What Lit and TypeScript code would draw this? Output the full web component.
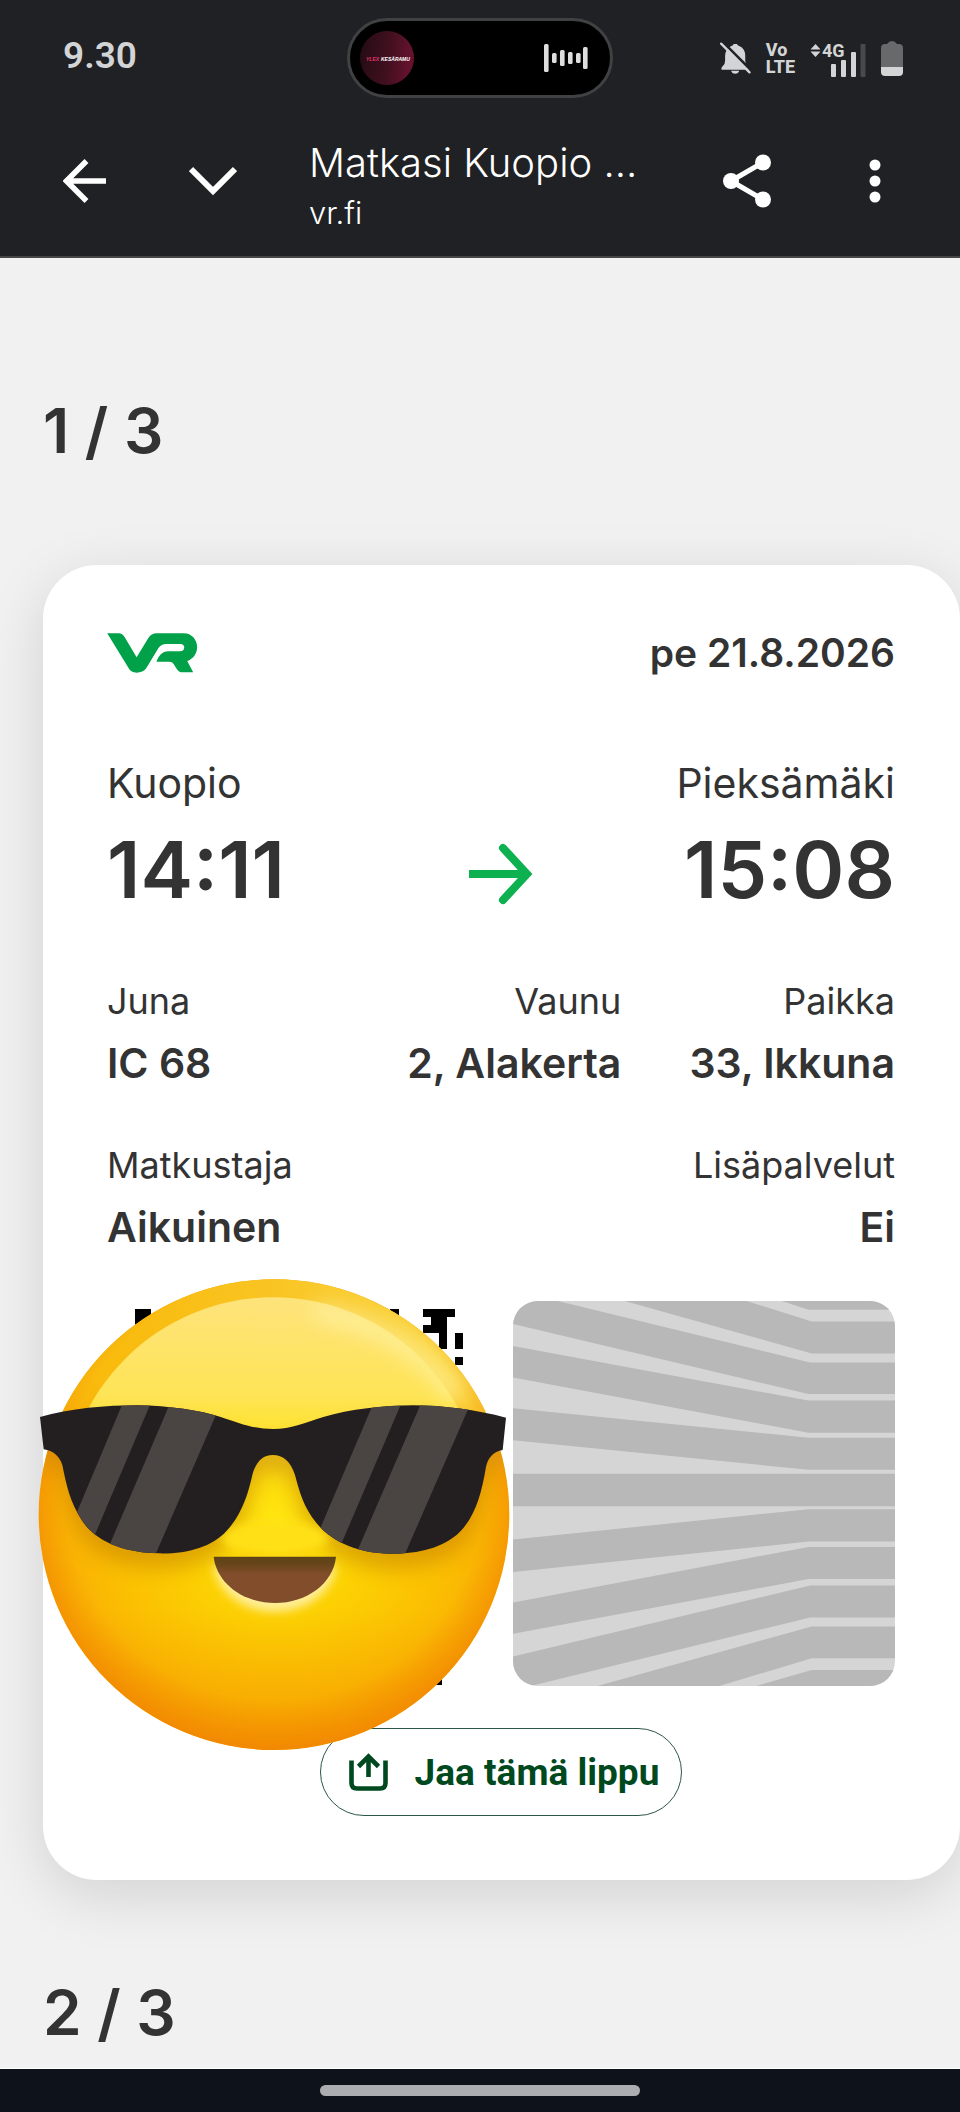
import { LitElement, html, css, svg } from "lit";
import { customElement, property } from "lit/decorators.js";

@customElement("status-bar")
class StatusBar extends LitElement {
  static styles = css`
    :host {
      display: grid;
      grid-template-columns: 1fr auto 1fr;
      align-items: center;
      padding: 18px 57px 16px;
      color: #d3d4d5;
      font-family: Roboto, sans-serif;
    }
    .clock { padding: 0 0 4px 6px; font-size: 37px; line-height: 44px; font-weight: 600; }
    .island {
      box-sizing: border-box;
      display: flex;
      align-items: center;
      justify-content: space-between;
      width: 266px;
      height: 80px;
      padding: 0 21px 0 10px;
      border: 3px solid #404142;
      border-radius: 40px;
      background: #000;
    }
    .icons { display: flex; align-items: center; justify-content: flex-end; gap: 15px; }
    .volte { font-size: 18px; line-height: 17px; font-weight: 800; }
    svg { display: block; }
    .tiny { font: italic 700 5px "Liberation Sans", sans-serif; }
    .net { font: 700 18px Roboto, sans-serif; }
  `;

  render() {
    const wave = [[2, 0, 28], [10, 9, 10], [18, 6, 16], [26, 8, 12], [34, 9, 10], [41, 3, 22]];
    return html`
      <div class="clock">9.30</div>
      <div class="island">
        <svg width="54" height="54" viewBox="0 0 54 54">
          <defs>
            <linearGradient id="art" x1="0" y1="0.4" x2="1" y2="0.5">
              <stop offset="0" stop-color="#250c14" />
              <stop offset="0.55" stop-color="#431020" />
              <stop offset="1" stop-color="#6a1230" />
            </linearGradient>
          </defs>
          <circle cx="27" cy="27" r="27" fill="url(#art)" />
          <text class="tiny" x="6" y="30" fill="#e0356b">YLEX</text>
          <text class="tiny" x="21" y="30" fill="#fff">KESÄRAMU</text>
        </svg>
        <svg width="46" height="28" viewBox="1 0 46 28">
          ${wave.map(([x, y, h]) => svg`<rect x=${x} y=${y} width="4.6" height=${h} rx="1.5" fill="#dedede" />`)}
        </svg>
      </div>
      <div class="icons">
        <svg width="31" height="32" viewBox="720 120 93 97">
          <path fill="#d3d4d5" d="M724 204 Q722 198 728 193 Q735 187 735 176 V162 Q736 140 754 132 Q760 130 761 126 H771 Q772 130 778 132 Q796 140 796 162 V176 Q796 187 803 193 Q809 198 807 204 Z M753 207 H778 Q775 216 765.500 216 Q756 216 753 207 Z" />
          <path d="M728 120 L816 208" stroke="#202124" stroke-width="8" />
          <path d="M723 125 L809 212" stroke="#d3d4d5" stroke-width="7" stroke-linecap="round" />
        </svg>
        <div class="volte">Vo<br />LTE</div>
        <svg width="56" height="38" viewBox="0 -4 56 38">
          <path fill="#d3d4d5" d="M0.500 6.500 L5.500 1 L10.500 6.500 Z M0.500 8.500 L5.500 14 L10.500 8.500 Z" />
          <text class="net" x="12" y="14" fill="#d3d4d5">4G</text>
          <g fill="#d3d4d5">
            <rect x="21" y="21" width="5" height="13" rx="1" />
            <rect x="31" y="17" width="5" height="17" rx="1" />
            <rect x="41" y="9" width="5" height="25" rx="1" />
          </g>
          <rect x="50.500" y="1" width="5" height="33" rx="1" fill="#48494b" />
        </svg>
        <svg width="22" height="35" viewBox="0 0 22 35">
          <path fill="#68696b" d="M4 3 H6 Q8 0 11 0 Q14 0 16 3 H18 Q22 3 22 7 V27 H0 V7 Q0 3 4 3 Z" />
          <path fill="#d3d4d5" d="M0 26 H22 V31 Q22 35 18 35 H4 Q0 35 0 31 Z" />
        </svg>
      </div>
    `;
  }
}

@customElement("browser-bar")
class BrowserBar extends LitElement {
  static styles = css`
    :host {
      display: flex;
      height: 134px;
      align-items: center;
      padding: 0 21px 8px;
      border-bottom: 2px solid #464646;
      color: #fff;
      font-family: Inter, sans-serif;
      font-weight: 300;
    }
    button {
      display: grid;
      place-items: center;
      flex: none;
      width: 128px;
      height: 128px;
      padding: 0;
      border: 0;
      background: none;
      color: inherit;
    }
    .page { flex: 1; min-width: 0; padding: 12px 0 0 32px; white-space: nowrap; }
    .title { font-size: 40px; line-height: 52px; }
    .domain { font-size: 31px; line-height: 48px; }
  `;

  render() {
    return html`
      <button aria-label="Takaisin">
        <svg width="44" height="44" viewBox="0 0 44 44" fill="none" stroke="#fff" stroke-width="5.5">
          <path d="M43 22 H5 M23.500 2 L3.500 22 L23.500 42" />
        </svg>
      </button>
      <button aria-label="Pienennä">
        <svg width="48" height="30" viewBox="0 0 48 30" fill="none" stroke="#fff" stroke-width="6">
          <path d="M2 3 L24 25 L46 3" />
        </svg>
      </button>
      <div class="page">
        <div class="title">Matkasi Kuopio ...</div>
        <div class="domain">vr.fi</div>
      </div>
      <button aria-label="Jaa">
        <svg width="48" height="54" viewBox="0 0 48 54" fill="#fff">
          <path d="M8 27 L40 8.500 M8 27 L40 45.500" stroke="#fff" stroke-width="5" />
          <circle cx="8" cy="27" r="8" /><circle cx="40" cy="8.500" r="8" /><circle cx="40" cy="45.500" r="8" />
        </svg>
      </button>
      <button aria-label="Lisää">
        <svg width="12" height="44" viewBox="0 0 12 44" fill="#fff">
          <circle cx="6" cy="6" r="5.500" /><circle cx="6" cy="22" r="5.500" /><circle cx="6" cy="38" r="5.500" />
        </svg>
      </button>
    `;
  }
}

@customElement("cool-face")
class CoolFace extends LitElement {
  static styles = css`
    :host { display: block; }
    svg { display: block; width: 100%; height: auto; }
  `;

  render() {
    const glasses = "M60 471 C150 445 260 436 350 436 C450 437 540 452 600 470 C660 490 700 507 760 507 C815 507 850 490 910 471 C990 448 1090 436 1180 436 C1270 436 1370 450 1458 473 L1448 570 C1420 575 1405 592 1398 620 C1385 700 1365 770 1320 815 C1270 865 1190 882 1110 881 C1020 880 940 850 890 790 C850 740 840 700 825 645 C812 605 790 585 758 585 C728 585 708 605 697 645 C685 700 665 765 620 812 C575 862 500 882 415 880 C320 878 230 850 185 780 C150 725 140 680 127 615 C120 590 100 572 71 568 Z";
    const mouth = "M581 890 H948 C940 970 860 1029 765 1029 C670 1029 590 970 581 890 Z";
    return html`
      <svg viewBox="54 54 1416 1419" role="img" aria-label="Aurinkolasihymiö">
        <defs>
          <radialGradient id="skin" gradientUnits="userSpaceOnUse" cx="775" cy="800" r="740">
            <stop offset="0" stop-color="#ffe812" />
            <stop offset="0.35" stop-color="#fcd203" />
            <stop offset="0.68" stop-color="#fbbf02" />
            <stop offset="0.88" stop-color="#f9b004" />
            <stop offset="1" stop-color="#f7a305" />
          </radialGradient>
          <linearGradient id="low" x1="0" y1="0.7" x2="0" y2="1">
            <stop offset="0" stop-color="#f08000" stop-opacity="0" />
            <stop offset="1" stop-color="#f08000" stop-opacity="0.4" />
          </linearGradient>
          <radialGradient id="rim" gradientUnits="userSpaceOnUse" cx="762" cy="690" r="790">
            <stop offset="0.8" stop-color="#f28500" stop-opacity="0" />
            <stop offset="1" stop-color="#f08000" stop-opacity="0.75" />
          </radialGradient>
          <linearGradient id="shine" gradientUnits="userSpaceOnUse" x1="0" y1="112" x2="0" y2="700">
            <stop offset="0" stop-color="#fee37b" />
            <stop offset="0.5" stop-color="#fee456" />
            <stop offset="0.72" stop-color="#ffe62c" stop-opacity="0.9" />
            <stop offset="1" stop-color="#ffe620" stop-opacity="0" />
          </linearGradient>
          <linearGradient id="top" gradientUnits="userSpaceOnUse" x1="300" y1="0" x2="1250" y2="0">
            <stop offset="0" stop-color="#f9bb0e" />
            <stop offset="0.5" stop-color="#f9c524" />
            <stop offset="1" stop-color="#fbd644" />
          </linearGradient>
          <linearGradient id="fade" gradientUnits="userSpaceOnUse" x1="0" y1="350" x2="0" y2="650">
            <stop offset="0" stop-color="#fff" />
            <stop offset="1" stop-color="#000" />
          </linearGradient>
          <mask id="upper"><rect width="1500" height="700" fill="url(#fade)" /></mask>
          <linearGradient id="lips" x1="0" y1="0" x2="0" y2="1">
            <stop offset="0" stop-color="#5d4318" />
            <stop offset="0.15" stop-color="#664519" />
            <stop offset="0.38" stop-color="#824d2a" />
          </linearGradient>
          <filter id="soft" x="-30%" y="-30%" width="160%" height="160%"><feGaussianBlur stdDeviation="30" /></filter>
          <filter id="glow" x="-30%" y="-60%" width="160%" height="220%"><feGaussianBlur stdDeviation="14" /></filter>
          <clipPath id="head"><circle cx="762" cy="764" r="706" /></clipPath>
          <clipPath id="lens"><path d=${glasses} /></clipPath>
        </defs>
        <g clip-path="url(#head)">
          <rect x="54" y="54" width="1416" height="1419" fill="url(#skin)" />
          <rect x="54" y="54" width="1416" height="640" fill="url(#top)" mask="url(#upper)" />
          <circle cx="762" cy="764" r="706" fill="url(#low)" />
          <circle cx="762" cy="764" r="706" fill="url(#rim)" />
          <circle cx="760" cy="740" r="628" fill="url(#shine)" />
          <path d="M880 155 C1080 185 1230 290 1310 420" fill="none" stroke="#fff6ae" stroke-width="46" opacity="0.75" filter="url(#soft)" />
          <g transform="translate(0 45)" opacity="0.42" filter="url(#soft)"><path d=${glasses} fill="#b56b00" /></g>
          <path d="M640 860 H890 L860 885 H670 Z" fill="#f5a800" opacity="0.5" filter="url(#glow)" />
          <g transform="translate(0 26)" filter="url(#glow)"><path d=${mouth} fill="#ffee9a" /></g>
          <ellipse cx="765" cy="835" rx="160" ry="52" fill="#ffe014" filter="url(#glow)" />
        </g>
        <path d=${mouth} fill="url(#lips)" />
        <path d=${glasses} fill="#231f20" />
        <g clip-path="url(#lens)" fill="#4a4442">
          <path d="M308 430 H392 L201 880 H119 Z M450 430 H603 L407 882 H257 Z" />
          <path d="M1060 430 H1144 L951 882 H868 Z M1203 430 H1352 L1155 882 H1008 Z" />
        </g>
      </svg>
    `;
  }
}

interface Fact { label: string; value: string; }

@customElement("ticket-card")
class TicketCard extends LitElement {
  @property() date = "";
  @property() from = "";
  @property() departs = "";
  @property() to = "";
  @property() arrives = "";
  @property({ attribute: false }) seat: Fact[] = [];
  @property({ attribute: false }) traveller: Fact[] = [];

  static styles = css`
    :host {
      display: block;
      padding: 64px 65px 64px 64px;
      border-radius: 54px;
      background: #fff;
      box-shadow: 0 15px 60px rgba(0, 0, 0, 0.13);
      color: #333;
      font-family: Inter, sans-serif;
    }
    svg { display: block; }
    .head { display: flex; align-items: center; justify-content: space-between; height: 48px; }
    .date { font-size: 39px; line-height: 48px; font-weight: 600; }
    .route { display: grid; grid-template-columns: 1fr auto 1fr; align-items: end; margin-top: 80px; }
    .stop { display: grid; gap: 16px; }
    .end { text-align: right; }
    .city { font-size: 41px; line-height: 52px; }
    .time { font-size: 79px; line-height: 88px; font-weight: 600; }
    .arrow { padding-bottom: 8px; }
    dl { display: flex; justify-content: flex-end; gap: 68px; margin: 64px 0 0; text-align: right; }
    .second { margin-top: 48px; }
    .fact:first-child { margin-right: auto; text-align: left; }
    dt { font-size: 36px; line-height: 48px; }
    dd { margin: 8px 0 0; font-size: 41px; line-height: 60px; font-weight: 600; }
    .codes { position: relative; display: grid; grid-template-columns: 1fr 1fr; gap: 24px; margin-top: 44px; }
    .codes svg { width: 100%; height: auto; }
    .pattern { border-radius: 25px; }
    .face { position: absolute; left: -69px; top: -23px; width: 472px; z-index: 1; pointer-events: none; }
    .share {
      display: flex;
      align-items: center;
      gap: 27px;
      box-sizing: border-box;
      height: 88px;
      margin: 42px auto 0;
      padding: 0 22px 0 28px;
      border: 1px solid #2c5746;
      border-radius: 44px;
      background: none;
      color: #00491f;
      font: 700 37px Roboto, sans-serif;
    }
  `;

  private facts(list: Fact[], extra = "") {
    return html`<dl class=${extra}>
      ${list.map((f) => html`<div class="fact"><dt>${f.label}</dt><dd>${f.value}</dd></div>`)}
    </dl>`;
  }

  render() {
    return html`
      <div class="head">
        <svg width="91" height="40" viewBox="320 760 274 121" role="img" aria-label="VR">
          <path fill="#00a149" d="M320 761 H355 Q366 761 373 773 L409 833 L444 776 Q453 761 470 761 H552 C575 761 592 780 592 803 C592 822 580 838 562 845 L580 879 H548 Q536 879 530 868 L521 854 Q517 847 508 847 H469 C476 828 486 815 505 815 H540 Q553 815 553 804 Q553 793 541 793 H498 Q484 793 475 805 L438 867 Q428 880 409 880 Q392 880 385 867 Z" />
        </svg>
        <div class="date">${this.date}</div>
      </div>
      <div class="route">
        <div class="stop"><div class="city">${this.from}</div><div class="time">${this.departs}</div></div>
        <svg class="arrow" width="64" height="62" viewBox="0 0 64 62" fill="none" stroke="#0db14f" stroke-width="8">
          <path d="M0 31 H58" /><path d="M34 5 L58 31 L34 57" stroke-linecap="round" stroke-linejoin="miter" />
        </svg>
        <div class="stop end"><div class="city">${this.to}</div><div class="time">${this.arrives}</div></div>
      </div>
      ${this.facts(this.seat)}
      ${this.facts(this.traveller, "second")}
      <div class="codes">
        <svg viewBox="107 1301 382 385" role="img" aria-label="Lippukoodi">
          <path d="M135 1309h16v16h-16z M390 1309h9v8h-9z M423 1309h32v8h-8v32h-8v-16h-16v-8h8v-8h-8z M455 1333h8v16h-8z M455 1357h8v8h-8z M434 1677h8v8h-8z" />
        </svg>
        <svg class="pattern" viewBox="101 63 1143 1153">
          <rect x="101" y="63" width="1143" height="1153" fill="#d5d5d5" />
          <g fill="#b8b8b8">
            <path d="M905 63 L985 89 H1244 V63 Z" />
            <path d="M435 63 H800 L995 124 H1244 V220 H995 Z" />
            <path d="M101 63 H235 L990 247 H1244 V341 H985 L101 132 Z" />
            <path d="M101 198 L985 361 H1244 V457 H985 L101 292 Z" />
            <path d="M101 384 L985 472 H1244 V568 H985 L101 480 Z" />
            <path d="M101 580 H1244 V677 H101 Z" />
            <path d="M101 777 L985 686 H1244 V783 H985 L101 874 Z" />
            <path d="M101 965 L985 799 H1244 V895 H985 L101 1059 Z" />
            <path d="M101 1127 L990 914 H1244 V1010 H990 L150 1216 H101 Z" />
            <path d="M350 1216 L995 1037 H1244 V1132 H995 L715 1216 Z" />
            <path d="M825 1216 L995 1167 H1244 V1216 Z" />
          </g>
        </svg>
        <cool-face class="face"></cool-face>
      </div>
      <button class="share">
        <svg width="39" height="38" viewBox="0 0 39 38" fill="none" stroke="currentColor" stroke-width="4.6">
          <path d="M2.500 7.500 V30 Q2.500 35.500 8 35.500 H31 Q36.500 35.500 36.500 30 V7.500" />
          <path d="M19.500 24 V5 M9.500 13.500 L19.500 3.500 L29.500 13.500" />
        </svg>
        ${"Jaa tämä lippu"}
      </button>
    `;
  }
}

@customElement("app-root")
class AppRoot extends LitElement {
  static styles = css`
    :host {
      display: flex;
      flex-direction: column;
      min-height: 100vh;
      background: #f1f1f1;
      color: #333;
      font-family: Inter, sans-serif;
    }
    header { background: #202124; }
    main { flex: 1; overflow: hidden; padding: 137px 0 18px 43px; border-bottom: 1px solid #fff; }
    h2 { margin: 0; font-size: 62px; line-height: 72px; font-weight: 600; }
    ticket-card { margin: 98px 0 97px; }
    .gestures { display: flex; justify-content: center; padding: 16px 0; background: #0e121a; }
    .handle { width: 33.333%; height: 11px; border-radius: 6px; background: #acadb1; }
  `;

  render() {
    return html`
      <header>
        <status-bar></status-bar>
        <browser-bar></browser-bar>
      </header>
      <main>
        <h2>1 / 3</h2>
        <ticket-card
          date="pe 21.8.2026"
          from="Kuopio"
          departs="14:11"
          to="Pieksämäki"
          arrives="15:08"
          .seat=${[
            { label: "Juna", value: "IC 68" },
            { label: "Vaunu", value: "2, Alakerta" },
            { label: "Paikka", value: "33, Ikkuna" },
          ]}
          .traveller=${[
            { label: "Matkustaja", value: "Aikuinen" },
            { label: "Lisäpalvelut", value: "Ei" },
          ]}
        ></ticket-card>
        <h2>2 / 3</h2>
      </main>
      <div class="gestures"><div class="handle"></div></div>
    `;
  }
}
